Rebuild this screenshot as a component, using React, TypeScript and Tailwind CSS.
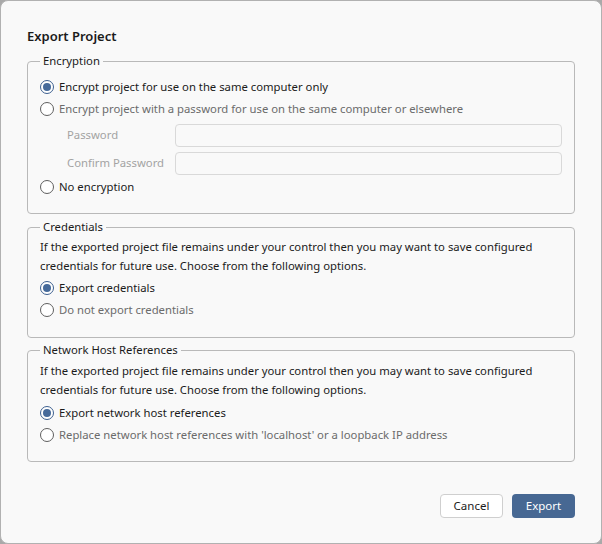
import React from "react";

const font = { fontFamily: '"Noto Sans", "Open Sans", sans-serif' };

function Radio({ checked, label, dim }: { checked?: boolean; label: string; dim?: boolean }) {
  return (
    <div className="flex items-center h-[22px]">
      <span
        className={
          checked
            ? "w-[14px] h-[14px] rounded-full border border-[#3d5f8f] bg-white flex items-center justify-center shrink-0"
            : "w-[14px] h-[14px] rounded-full border border-[#5f5f5f] bg-white shrink-0"
        }
      >
        {checked && <span className="w-[8px] h-[8px] rounded-full bg-[#466a9a]" />}
      </span>
      <span className={"ml-[5px] text-[11.3px] " + (dim ? "text-[#6b6b6b]" : "text-[#1b1b1b]")}>{label}</span>
    </div>
  );
}

function Group({ title, children, className }: { title: string; children: React.ReactNode; className?: string }) {
  return (
    <fieldset className={"border border-[#b9b9b9] rounded-[4px] px-[12px] pb-[10px] m-0 " + (className || "")}>
      <legend className="ml-[0px] px-[3px] text-[11.3px] text-[#1b1b1b] leading-[14px]">{title}</legend>
      {children}
    </fieldset>
  );
}

export default function App() {
  return (
    <div className="w-[602px] h-[544px] bg-[#a9a9a9]" style={font}>
      <div className="w-[602px] h-[544px] bg-[#f9f9f9] border border-[#b1b1b1] rounded-[8px] flex flex-col px-[26px]">
        <h1 className="mt-[26px] text-[13px] font-semibold text-[#1b1b1b] leading-[18px]">Export Project</h1>
        <Group title="Encryption" className="mt-[9px] pt-[8px]">
          <Radio checked label="Encrypt project for use on the same computer only" />
          <Radio dim label="Encrypt project with a password for use on the same computer or elsewhere" />
          <div className="grid grid-cols-[108px_1fr] gap-y-[5px] items-center mt-[4px] pl-[27px] mb-[1px]">
            <span className="text-[11.3px] text-[#a3a3a3]">Password</span>
            <div className="h-[23px] border border-[#d9d9d9] rounded-[4px] bg-[#f9f9f9]" />
            <span className="text-[11.3px] text-[#a3a3a3]">Confirm Password</span>
            <div className="h-[23px] border border-[#d9d9d9] rounded-[4px] bg-[#f9f9f9]" />
          </div>
          <Radio label="No encryption" />
          <div className="h-[5px]" />
        </Group>
        <Group title="Credentials" className="mt-[6px] pt-[3px]">
          <p className="text-[11.3px] text-[#1b1b1b] leading-[19px]">
            If the exported project file remains under your control then you may want to save configured credentials for future use. Choose from the following options.
          </p>
          <div className="mt-[2px]">
            <Radio checked label="Export credentials" />
            <Radio dim label="Do not export credentials" />
          </div>
          <div className="h-[6px]" />
        </Group>
        <Group title="Network Host References" className="mt-[5px] pt-[4px]">
          <p className="text-[11.3px] text-[#1b1b1b] leading-[19px]">
            If the exported project file remains under your control then you may want to save configured credentials for future use. Choose from the following options.
          </p>
          <div className="mt-[3px]">
            <Radio checked label="Export network host references" />
            <Radio dim label="Replace network host references with 'localhost' or a loopback IP address" />
          </div>
          <div className="h-[5px]" />
        </Group>
        <div className="mt-auto mb-[25px] flex justify-end gap-[9px]">
          <button className="w-[63px] h-[24px] border border-[#cfcfcf] rounded-[4px] bg-white text-[11.5px] text-[#1b1b1b]">Cancel</button>
          <button className="w-[63px] h-[24px] rounded-[4px] bg-[#476893] text-[11.5px] text-white">Export</button>
        </div>
      </div>
    </div>
  );
}
